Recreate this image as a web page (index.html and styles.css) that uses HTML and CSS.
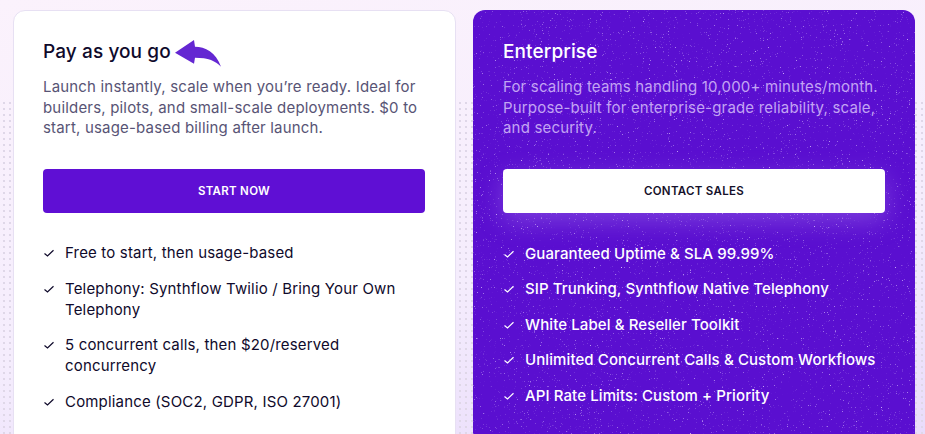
FILE: index.html
```html
<!DOCTYPE html>
<html lang="en">
<head>
  <meta charset="UTF-8" />
  <title>Pricing</title>
  <link rel="stylesheet" href="styles.css">
</head>
<body>
  <div class="pricing">

    <div class="card card-light">
      <div class="card-title-row">
        <h2 class="card-title">Pay as you go</h2>
        <svg class="title-arrow" width="46" height="27" viewBox="0 0 46 27">
          <path d="M0 12.7 L19 0 L20 6.7 C30 6.7 41 12 46 26.7 C41 21 33 17.7 20 17.7 L19 23.7 Z" fill="#6427d2"/>
        </svg>
      </div>
      <p class="card-text">Launch instantly, scale when you’re ready. Ideal for builders, pilots, and small-scale deployments. $0 to start, usage-based billing after launch.</p>
      <a class="btn btn-purple">START NOW</a>
      <ul class="features">
        <li><svg class="check" viewBox="0 0 12 12"><path d="M1.5 6.5 L4.5 9 L10.5 3.2"/></svg><span>Free to start, then usage-based</span></li>
        <li><svg class="check" viewBox="0 0 12 12"><path d="M1.5 6.5 L4.5 9 L10.5 3.2"/></svg><span>Telephony: Synthflow Twilio / Bring Your Own Telephony</span></li>
        <li><svg class="check" viewBox="0 0 12 12"><path d="M1.5 6.5 L4.5 9 L10.5 3.2"/></svg><span>5 concurrent calls, then $20/reserved concurrency</span></li>
        <li><svg class="check" viewBox="0 0 12 12"><path d="M1.5 6.5 L4.5 9 L10.5 3.2"/></svg><span>Compliance (SOC2, GDPR, ISO 27001)</span></li>
      </ul>
    </div>

    <div class="card card-dark">
      <svg class="speckle" width="100%" height="100%">
        <filter id="noise">
          <feTurbulence type="fractalNoise" baseFrequency="0.85" numOctaves="2" seed="7"/>
          <feColorMatrix type="matrix" values="0 0 0 0 0.75  0 0 0 0 0.6  0 0 0 0 1  0 0 0 4 -2.8"/>
        </filter>
        <rect width="100%" height="100%" filter="url(#noise)"/>
      </svg>
      <div class="card-inner">
        <div class="card-title-row">
          <h2 class="card-title">Enterprise</h2>
        </div>
        <p class="card-text">For scaling teams handling 10,000+ minutes/month. Purpose-built for enterprise-grade reliability, scale, and security.</p>
        <a class="btn btn-white">CONTACT SALES</a>
        <ul class="features">
          <li><svg class="check" viewBox="0 0 12 12"><path d="M1.5 6.5 L4.5 9 L10.5 3.2"/></svg><span>Guaranteed Uptime &amp; SLA 99.99%</span></li>
          <li><svg class="check" viewBox="0 0 12 12"><path d="M1.5 6.5 L4.5 9 L10.5 3.2"/></svg><span>SIP Trunking, Synthflow Native Telephony</span></li>
          <li><svg class="check" viewBox="0 0 12 12"><path d="M1.5 6.5 L4.5 9 L10.5 3.2"/></svg><span>White Label &amp; Reseller Toolkit</span></li>
          <li><svg class="check" viewBox="0 0 12 12"><path d="M1.5 6.5 L4.5 9 L10.5 3.2"/></svg><span>Unlimited Concurrent Calls &amp; Custom Workflows</span></li>
          <li><svg class="check" viewBox="0 0 12 12"><path d="M1.5 6.5 L4.5 9 L10.5 3.2"/></svg><span>API Rate Limits: Custom + Priority</span></li>
        </ul>
      </div>
    </div>

  </div>
</body>
</html>
```

FILE: styles.css
```css
html, body {
  margin: 0;
  padding: 0;
  height: 434px;
  overflow: hidden;
  font-family: Inter, "Liberation Sans", sans-serif;
}

body {
  position: relative;
  background: linear-gradient(170deg, #fbf2fc 0%, #f5edfd 60%, #e9dcfb 100%);
}

/* dotted backdrop, only starts part way down the page */
body::before {
  content: "";
  position: absolute;
  top: 100px;
  left: 0;
  right: 0;
  bottom: 0;
  background-image: radial-gradient(circle, #dfd7e8 0.8px, transparent 1px);
  background-size: 6px 6px;
  background-position: 1px 0;
}

.pricing {
  position: relative;
  display: grid;
  grid-template-columns: 443px 442px;
  gap: 17px;
  height: 424px;
  padding: 10px 0 0 13px;
  overflow: hidden;
}

.card {
  box-sizing: border-box;
  height: 440px;
  border-radius: 12px;
}

.card-light {
  padding: 21px 30px 0 29px;
  background: #fff;
  border: 1px solid #e7e0f3;
  color: #0f0a2b;
}

.card-dark {
  position: relative;
  overflow: hidden;
  background: #5a0fd0;
  color: #fff;
}

.speckle {
  position: absolute;
  inset: 0;
}

.card-inner {
  position: relative;
  padding: 22px 30px 0;
}

.card-title-row {
  display: flex;
  align-items: center;
  height: 40px;
}

.card-title {
  margin: 0;
  font-size: 19px;
  font-weight: 500;
  line-height: 40px;
  letter-spacing: 0.1px;
}

.title-arrow {
  margin: 3px 0 0 4px;
}

.card-text {
  margin: 5px 0 0;
  height: 62px;
  font-size: 15px;
  line-height: 20.7px;
  letter-spacing: 0.18px;
  color: #585475;
}

.card-dark .card-text {
  color: #c3a4f3;
}

.btn {
  display: flex;
  align-items: center;
  justify-content: center;
  height: 44px;
  margin-top: 30px;
  border-radius: 4px;
  font-size: 11.5px;
  font-weight: 600;
  letter-spacing: 0.3px;
}

.btn-purple {
  background: #5f0fd4;
  color: #fff;
}

.btn-white {
  background: #fff;
  color: #15102a;
  box-shadow: 0 8px 24px rgba(190, 150, 245, 0.35);
}

.features {
  list-style: none;
  margin: 29.2px 0 0;
  padding: 0;
  display: flex;
  flex-direction: column;
  gap: 14.5px;
  font-size: 15px;
  line-height: 21px;
  letter-spacing: 0.17px;
}

.features li {
  display: flex;
  gap: 10px;
}

.card-dark .features {
  margin-top: 29.5px;
  font-weight: 500;
  letter-spacing: 0.1px;
}

.check {
  flex: none;
  width: 12px;
  height: 12px;
  margin-top: 5px;
  fill: none;
  stroke: currentColor;
  stroke-width: 1.2;
}
```
